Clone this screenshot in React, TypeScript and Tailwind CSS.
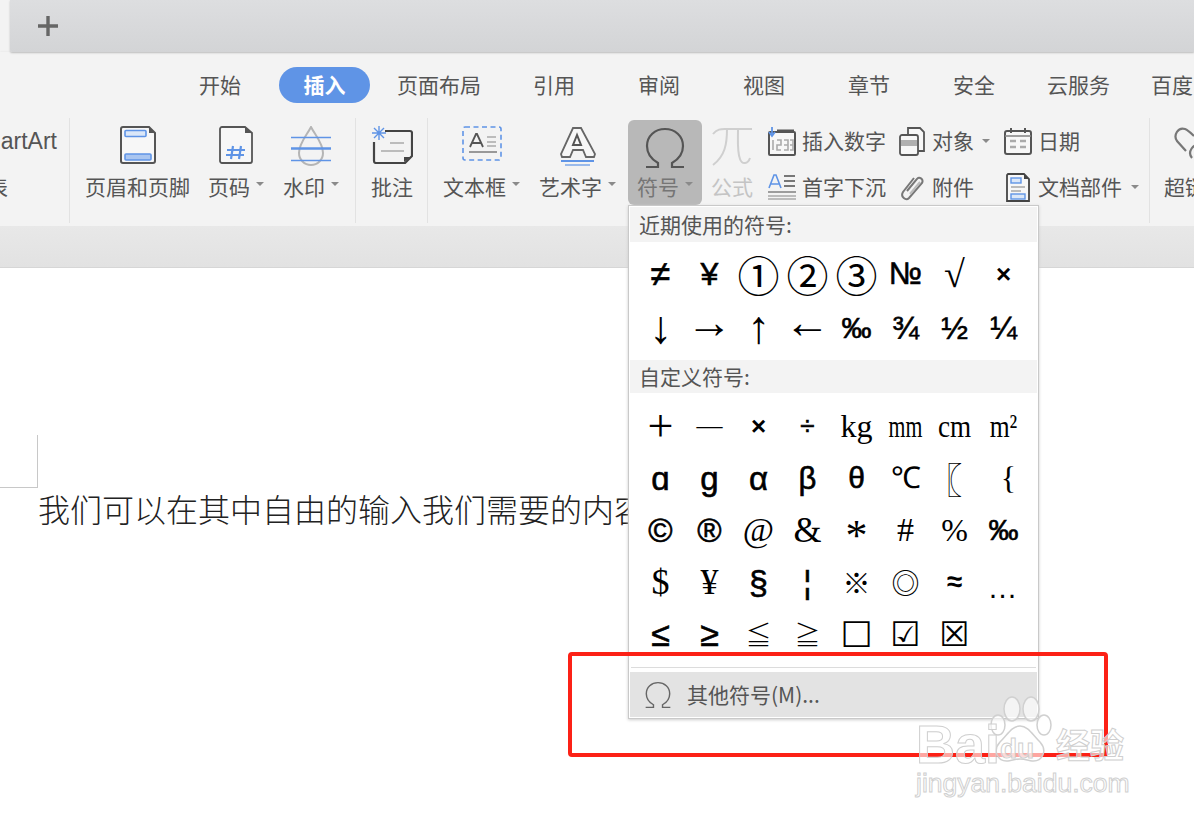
import { ReactNode } from "react";

const cjk = "font-['Noto_Sans_CJK_SC','Liberation_Sans',sans-serif]";
const sans = "font-['Liberation_Sans',sans-serif]";
const serif = "font-['Liberation_Serif',serif]";
const deja = "font-['DejaVu_Sans',sans-serif]";
const semi = "[-webkit-text-stroke:0.6px_#000]";

const tabs = [
  { label: "开始", cls: "" },
  { label: "插入", cls: "ml-[38px] w-[91px] h-[36px] rounded-[18px] bg-[#5f94e6] text-white font-bold justify-center" },
  { label: "页面布局", cls: "ml-[27px]" },
  { label: "引用", cls: "ml-[52px]" },
  { label: "审阅", cls: "ml-[63px]" },
  { label: "视图", cls: "ml-[63px]" },
  { label: "章节", cls: "ml-[63px]" },
  { label: "安全", cls: "ml-[63px]" },
  { label: "云服务", cls: "ml-[52px]" },
  { label: "百度", cls: "ml-[41px]" },
];

const recent = [
  { c: "≠", f: `${sans} text-[36px] ${semi}` },
  { c: "¥", f: `${sans} text-[32px] ${semi}` },
  { c: "①", f: `${cjk} text-[42px]` },
  { c: "②", f: `${cjk} text-[42px]` },
  { c: "③", f: `${cjk} text-[42px]` },
  { c: "№", f: `${sans} text-[31px] ${semi}` },
  { c: "√", f: `${serif} text-[38px]` },
  { c: "×", f: `${sans} text-[26px] font-bold` },
  { c: "↓", f: `${serif} text-[46px]` },
  { c: "→", f: `${serif} text-[46px] pb-[10px]` },
  { c: "↑", f: `${serif} text-[46px]` },
  { c: "←", f: `${serif} text-[46px] pb-[10px]` },
  { c: "‰", f: `${sans} text-[30px] ${semi}` },
  { c: "¾", f: `${sans} text-[32px] ${semi}` },
  { c: "½", f: `${sans} text-[32px] ${semi}` },
  { c: "¼", f: `${sans} text-[32px] ${semi}` },
];

const custom = [
  { c: "+", f: `${serif} text-[46px]` },
  { c: "—", f: `${serif} text-[26px]` },
  { c: "×", f: `${sans} text-[26px] font-bold` },
  { c: "÷", f: `${sans} text-[26px] ${semi}` },
  { c: "kg", f: `${serif} text-[32px]` },
  { c: "mm", f: `${serif} text-[32px] scale-x-[0.68]` },
  { c: "cm", f: `${serif} text-[32px] scale-x-[0.85]` },
  { c: "m²", f: `${serif} text-[32px] scale-x-[0.8]` },
  { c: "ɑ", f: `${sans} text-[33px] ${semi}` },
  { c: "g", f: `${sans} text-[33px] ${semi}` },
  { c: "α", f: `${sans} text-[33px] ${semi}` },
  { c: "β", f: `${sans} text-[31px] ${semi}` },
  { c: "θ", f: `${sans} text-[30px] ${semi}` },
  { c: "℃", f: `${serif} text-[30px]` },
  { c: "〖", f: `${cjk} text-[36px] font-thin pr-[20px]` },
  { c: "{", f: `${serif} text-[32px] pl-[10px]` },
  { c: "©", f: `${sans} text-[33px] ${semi}` },
  { c: "®", f: `${sans} text-[33px] ${semi}` },
  { c: "@", f: `${serif} text-[34px]` },
  { c: "&", f: `${serif} text-[36px]` },
  { c: "*", f: `${serif} text-[44px] pt-[12px]` },
  { c: "#", f: `${serif} text-[34px]` },
  { c: "%", f: `${serif} text-[32px]` },
  { c: "‰", f: `${sans} text-[30px] ${semi}` },
  { c: "$", f: `${serif} text-[36px]` },
  { c: "¥", f: `${serif} text-[36px]` },
  { c: "§", f: `${sans} text-[34px] ${semi}` },
  { c: "¦", f: `${sans} text-[32px] ${semi}` },
  { c: "※", f: `${cjk} text-[28px]` },
  { c: "◎", f: `${cjk} text-[28px]` },
  { c: "≈", f: `${sans} text-[28px] font-bold` },
  { c: "…", f: `${sans} text-[30px] pt-[12px] tracking-[2px]` },
  { c: "≤", f: `${sans} text-[34px] ${semi}` },
  { c: "≥", f: `${sans} text-[34px] ${semi}` },
  { c: "≦", f: `${cjk} text-[26px] font-light` },
  { c: "≧", f: `${cjk} text-[26px] font-light` },
  { c: "□", f: `${deja} text-[34px] pb-[6px]` },
  { c: "☑", f: `${deja} text-[34px]` },
  { c: "☒", f: `${deja} text-[34px]` },
  { c: "", f: "" },
];

const Caret = () => (
  <span className="ml-[6px] inline-block w-0 h-0 border-x-[4px] border-t-[4px] border-x-transparent border-t-[#8a8a8a] mb-[7px]" />
);

const Omega = ({ w, h, color }: { w: number; h: number; color: string }) => (
  <svg width={w} height={h} viewBox="0 0 40 42" fill="none" stroke={color} strokeWidth="2.2">
    <path d="M1 40h12v-4C6 32 2 26 2 19 2 9 10 2 20 2s18 7 18 17c0 7-4 13-11 17v4h12" />
  </svg>
);

const IconHeader = () => (
  <svg width="36" height="38" viewBox="0 0 36 38" fill="none">
    <path d="M4 1h25l6 6v28a2 2 0 0 1-2 2H3a2 2 0 0 1-2-2V3a2 2 0 0 1 2-2z" fill="#f7f7f7" stroke="#555" strokeWidth="2" />
    <path d="M29 1l6 6h-6z" fill="#555" />
    <rect x="5" y="4.5" width="21" height="6" rx="1" fill="#dbe7f8" stroke="#5f94e6" strokeWidth="1.6" />
    <rect x="5" y="28" width="26" height="6" rx="1" fill="#a9c5f0" stroke="#5f94e6" strokeWidth="1.6" />
  </svg>
);

const IconPage = () => (
  <svg width="34" height="38" viewBox="0 0 34 38" fill="none">
    <path d="M3 1h23l7 6v28a2 2 0 0 1-2 2H3a2 2 0 0 1-2-2V3a2 2 0 0 1 2-2z" fill="#f7f7f7" stroke="#555" strokeWidth="1.8" />
    <path d="M26 1l7 6h-7z" fill="#555" />
    <path d="M14 20l-2 13M22 20l-2 13M8 24h18M7 29h18" stroke="#5f94e6" strokeWidth="2.2" />
  </svg>
);

const IconWater = () => (
  <svg width="40" height="41" viewBox="0 0 40 41" fill="none">
    <path d="M20 1C16 9 8 17 8 27a12 12 0 0 0 24 0C32 17 24 9 20 1z" stroke="#b5b5b5" strokeWidth="2" />
    <path d="M0 11.5h40M0 34.5h40" stroke="#5f94e6" strokeWidth="1.3" />
    <path d="M0 22.5h40" stroke="#5f94e6" strokeWidth="2.4" />
  </svg>
);

const IconComment = () => (
  <svg width="42" height="38" viewBox="0 0 42 38" fill="none">
    <path d="M14 5h25a2 2 0 0 1 2 2v23l-7 7H5a2 2 0 0 1-2-2V16" stroke="#444" strokeWidth="2.2" />
    <path d="M33 36v-5h7z" fill="#444" />
    <path d="M19 17h14M10 25h23" stroke="#aaa" strokeWidth="1.4" />
    <path d="M8 0v14M1 7h14M3 2l10 10M13 2L3 12" stroke="#5f94e6" strokeWidth="1.4" />
  </svg>
);

const IconTextBox = () => (
  <svg width="40" height="35" viewBox="0 0 40 35" fill="none">
    <rect x="1" y="1" width="38" height="33" rx="2" stroke="#5f94e6" strokeWidth="1.6" strokeDasharray="5 3.5" />
    <path d="M8 21l6-13h1l6 13M10 17h9" stroke="#555" strokeWidth="1.8" />
    <path d="M25 11h9M25 16h9M25 20h9" stroke="#aaa" strokeWidth="1.6" />
    <path d="M7 26h28" stroke="#999" strokeWidth="2" />
  </svg>
);

const IconArt = () => (
  <svg width="38" height="40" viewBox="0 0 38 40" fill="none">
    <path d="M14 2h8l14 26-1 3h-8l-3-7H14l-3 7H3l-1-3z" fill="#f7f7f7" stroke="#666" strokeWidth="1.8" />
    <path d="M18 9l-4 10h8z" stroke="#555" strokeWidth="2" />
    <path d="M2 35h33" stroke="#5f94e6" strokeWidth="2" />
    <path d="M6 39h25" stroke="#5f94e6" strokeWidth="1.2" />
  </svg>
);

const IconPi = () => (
  <svg width="42" height="42" viewBox="0 0 42 42" fill="none" stroke="#cfcfcf" strokeWidth="2">
    <path d="M2 8C6 3 10 3 14 3h27" />
    <path d="M16 3C16 18 14 30 2 39" />
    <path d="M27 3c0 14-1 22 2 30 2 6 8 5 10-1" />
  </svg>
);

const IconNumber = () => (
  <svg width="28" height="29" viewBox="0 0 28 29" fill="none">
    <rect x="1" y="5" width="26" height="23" rx="1" fill="#f7f7f7" stroke="#555" strokeWidth="2" />
    <path d="M9 4h17" stroke="#555" strokeWidth="3" />
    <path d="M5 13v10M9 13h4v5H9v5h4M16 13h4v10h-4M16 18h4M22 13h3v10h-3M22 18h3" stroke="#aaa" strokeWidth="1.6" />
    <path d="M4 0v8M1 5l3 4 3-4" stroke="#5f94e6" strokeWidth="1.8" />
  </svg>
);

const IconDropCap = () => (
  <svg width="28" height="26" viewBox="0 0 28 26" fill="none">
    <path d="M1 14L6 1h2l5 13M3 10h9" stroke="#5f94e6" strokeWidth="1.6" />
    <path d="M16 2h11M16 7h11M16 12h11" stroke="#777" strokeWidth="2" />
    <path d="M0 18h28" stroke="#888" strokeWidth="1.6" />
    <path d="M0 22h28M0 25h28" stroke="#aaa" strokeWidth="1.4" />
  </svg>
);

const IconObject = () => (
  <svg width="26" height="29" viewBox="0 0 26 29" fill="none">
    <path d="M9 8V1h12l4 4v19h-6" fill="#f7f7f7" stroke="#555" strokeWidth="1.8" />
    <rect x="1" y="8" width="18" height="20" rx="2" fill="#f7f7f7" stroke="#555" strokeWidth="1.8" />
    <path d="M2 13h16v6H2z" fill="#b0b0b0" />
  </svg>
);

const IconClip = () => (
  <svg width="26" height="27" viewBox="0 0 26 27" fill="none" stroke="#777" strokeWidth="2">
    <path d="M8 17L18 5c2-3 7 0 5 4L10 24c-3 3-9-1-6-6L15 4" />
    <path d="M11 20L21 8" stroke="#bbb" />
  </svg>
);

const IconCalendar = () => (
  <svg width="28" height="27" viewBox="0 0 28 27" fill="none">
    <rect x="1" y="3" width="26" height="23" rx="2" fill="#f7f7f7" stroke="#555" strokeWidth="2" />
    <path d="M1 8h26" stroke="#888" strokeWidth="1.6" />
    <path d="M7 0v5M21 0v5" stroke="#555" strokeWidth="2" />
    <path d="M6 13h6M16 13h6M6 19h6M16 19h6" stroke="#aaa" strokeWidth="2.4" />
  </svg>
);

const IconDocPart = () => (
  <svg width="24" height="29" viewBox="0 0 24 29" fill="none">
    <path d="M2 1h16l5 5v22H1V2z" fill="#f7f7f7" stroke="#444" strokeWidth="1.8" />
    <path d="M18 1l5 5h-5z" fill="#444" />
    <rect x="5" y="5" width="10" height="5" fill="#dbe7f8" stroke="#5f94e6" strokeWidth="1.4" />
    <path d="M5 14h14M5 18h10" stroke="#bbb" strokeWidth="2" />
    <rect x="5" y="21" width="14" height="5" fill="#dbe7f8" stroke="#5f94e6" strokeWidth="1.4" />
  </svg>
);

const IconLink = () => (
  <svg className="ml-[10px]" width="36" height="34" viewBox="0 0 36 34" fill="none" stroke="#777" strokeWidth="2.2">
    <path d="M12 25L3 15C-1 9 4 1 11 3c3 1 6 4 9 7" />
    <path d="M18 32c-5-6 1-15 9-13" />
  </svg>
);

const Big = ({ icon, label, caret, cls }: { icon: ReactNode; label: string; caret?: boolean; cls: string }) => (
  <div className={`flex flex-col items-center shrink-0 ${cls}`}>
    <div className="h-[47px] pt-[8px] flex items-start justify-center">{icon}</div>
    <div className="mt-[7px] h-[30px] flex items-center whitespace-nowrap">
      {label}
      {caret && <Caret />}
    </div>
  </div>
);

const Small = ({ icon, label, caret, gap }: { icon: ReactNode; label: string; caret?: boolean; gap: string }) => (
  <div className={`h-[46px] flex items-center whitespace-nowrap ${gap}`}>
    {icon}
    {label}
    {caret && <span className="-ml-[5px] mt-[7px] flex"><Caret /></span>}
  </div>
);

const Sep = () => <div className="w-px h-[105px] bg-[#e2e2e2] shrink-0" />;

const SymbolGrid = ({ items, rowCls }: { items: { c: string; f: string }[]; rowCls: string }) => (
  <div className={`grid grid-cols-[repeat(8,49px)] px-[6px] ${rowCls}`}>
    {items.map((s, i) => (
      <div key={i} className={`flex items-center justify-center text-black leading-none ${s.f}`}>
        {s.c}
      </div>
    ))}
  </div>
);

const App = () => {
  return (
    <div className={`relative w-[1194px] h-[824px] overflow-hidden bg-white text-[21px] text-[#555] ${cjk}`}>
      {/* tab bar */}
      <div className="flex h-[52px] bg-[#f3f3f3]">
        <div className="w-[10px]" />
        <div className="flex-1 flex items-center pl-[27px] rounded-bl-[2px] bg-gradient-to-b from-[#dddee0] to-[#d3d4d6] shadow-[0_1px_2px_#bbb]">
          <svg width="22" height="22" viewBox="0 0 22 22" stroke="#666" strokeWidth="3.4">
            <path d="M11 1v20M1 11h20" />
          </svg>
        </div>
      </div>

      {/* ribbon */}
      <div className="h-[174px] pt-[15px] bg-[#f3f3f3] shadow-[0_1px_3px_#ccc]">
        <div className="flex items-center h-[36px] pl-[199px] whitespace-nowrap">
          {tabs.map((t) => (
            <div key={t.label} className={`flex items-center shrink-0 ${t.cls}`}>
              {t.label}
            </div>
          ))}
        </div>
        <div className="flex h-[108px] mt-[15px] whitespace-nowrap">
          <div className="w-[69px] shrink-0 overflow-hidden flex flex-col items-end">
            <div className={`h-[46px] flex items-center pr-[12px] text-[23px] ${sans}`}>SmartArt</div>
            <div className="h-[46px] flex items-center pr-[61px]">图表</div>
          </div>
          <Sep />
          <Big icon={<IconHeader />} label="页眉和页脚" cls="ml-[15px] w-[105px]" />
          <Big icon={<IconPage />} label="页码" caret cls="ml-[18px] w-[56px]" />
          <Big icon={<IconWater />} label="水印" caret cls="ml-[19px] w-[56px]" />
          <div className="ml-[16px]"><Sep /></div>
          <Big icon={<IconComment />} label="批注" cls="ml-[15px] w-[42px]" />
          <div className="ml-[14px]"><Sep /></div>
          <Big icon={<IconTextBox />} label="文本框" caret cls="ml-[15px] w-[77px]" />
          <Big icon={<IconArt />} label="艺术字" caret cls="ml-[19px] w-[77px]" />
          <div className="ml-[12px] mt-[2px] w-[74px] h-[85px] shrink-0 rounded-[6px] bg-[#b8b8b8] flex flex-col items-center text-[#757575]">
            <div className="h-[50px] pt-[7px]">
              <Omega w={40} h={42} color="#555" />
            </div>
            <div className="h-[34px] flex items-center">
              符号
              <Caret />
            </div>
          </div>
          <Big icon={<IconPi />} label="公式" cls="ml-[9px] w-[42px] text-[#c4c4c4]" />
          <div className="ml-[15px] w-[131px] shrink-0 flex flex-col">
            <Small icon={<IconNumber />} label="插入数字" gap="gap-[6px]" />
            <Small icon={<IconDropCap />} label="首字下沉" gap="gap-[6px]" />
          </div>
          <div className="w-[105px] shrink-0 flex flex-col">
            <Small icon={<IconObject />} label="对象" caret gap="gap-[7px]" />
            <Small icon={<IconClip />} label="附件" gap="gap-[7px]" />
          </div>
          <div className="w-[145px] shrink-0 flex flex-col">
            <Small icon={<IconCalendar />} label="日期" gap="gap-[6px]" />
            <div className="pl-[2px]">
              <Small icon={<IconDocPart />} label="文档部件" caret gap="gap-[8px]" />
            </div>
          </div>
          <Sep />
          <Big icon={<IconLink />} label="超链接" cls="ml-[14px] w-[63px] !items-start" />
        </div>
      </div>

      <div className="h-[42px] bg-gradient-to-b from-[#e8e8e8] to-[#e2e2e2] border-b border-[#d6d6d6]" />

      {/* document */}
      <div className="pt-[167px]">
        <div className="w-[38px] h-[53px] border-r border-b border-[#c8c8c8]" />
        <div className="mt-[3px] ml-[38px] text-[32px] leading-[34px] font-light text-[#222] whitespace-nowrap">
          我们可以在其中自由的输入我们需要的内容
        </div>
      </div>

      {/* symbol menu */}
      <div className="absolute left-[628px] top-[205px] w-[411px] h-[514px] p-px border border-[#c9c9c9] bg-white shadow-[0_1px_3px_#ccc] flex flex-col">
        <div className="h-[35px] bg-[#f3f3f3] pl-[9px] flex items-center">近期使用的符号:</div>
        <div className="py-[5px]">
          <SymbolGrid items={recent} rowCls="auto-rows-[54px]" />
        </div>
        <div className="h-[34px] bg-[#f3f3f3] pl-[9px] flex items-center">自定义符号:</div>
        <div className="pt-[7px]">
          <SymbolGrid items={custom} rowCls="auto-rows-[52px]" />
        </div>
        <div className="mt-[7px] mx-px h-px bg-[#dcdcdc]" />
        <div className="mt-[4px] h-[45px] bg-[#e3e3e3] flex items-center pl-[15px] gap-[16px]">
          <Omega w={26} h={28} color="#666" />
          其他符号(M)...
        </div>
      </div>

      {/* red annotation */}
      <div className="absolute left-[568px] top-[652px] w-[540px] h-[105px] border-[4px] border-[#fc2116] rounded-[4px]" />

      {/* baidu watermark */}
      <svg className="absolute left-[990px] top-[696px]" width="62" height="72" viewBox="0 0 62 72" fill="#ffffff" fillOpacity="0.6" stroke="#d0d0d0" strokeWidth="1.5">
        <ellipse cx="22" cy="13" rx="8" ry="12" />
        <ellipse cx="41" cy="13" rx="8" ry="12" />
        <ellipse cx="8" cy="29" rx="7" ry="10" />
        <ellipse cx="54" cy="29" rx="7" ry="10" />
        <path d="M30 30c8 0 12 8 20 16 8 9 2 20-8 19-5-1-8-2-12-2s-7 1-12 2c-10 1-16-10-8-19 8-8 12-16 20-16z" />
      </svg>
      <div className={`absolute left-[916px] top-[722px] text-[54px] leading-[44px] font-bold text-white/60 [-webkit-text-stroke:1px_#cfcfcf] ${sans}`}>
        Bai
      </div>
      <div className={`absolute left-[1000px] top-[734px] text-[28px] leading-[30px] font-bold text-white/60 [-webkit-text-stroke:1px_#cfcfcf] ${sans}`}>
        du
      </div>
      <div className="absolute left-[1056px] top-[722px] text-[34px] leading-[44px] font-bold text-white/60 [-webkit-text-stroke:1px_#cfcfcf]">
        经验
      </div>
      <div className={`absolute left-[916px] top-[770px] text-[26.5px] leading-[26px] text-white/60 [-webkit-text-stroke:1px_#d0d0d0] ${sans}`}>
        jingyan.baidu.com
      </div>
    </div>
  );
};

export default App;
